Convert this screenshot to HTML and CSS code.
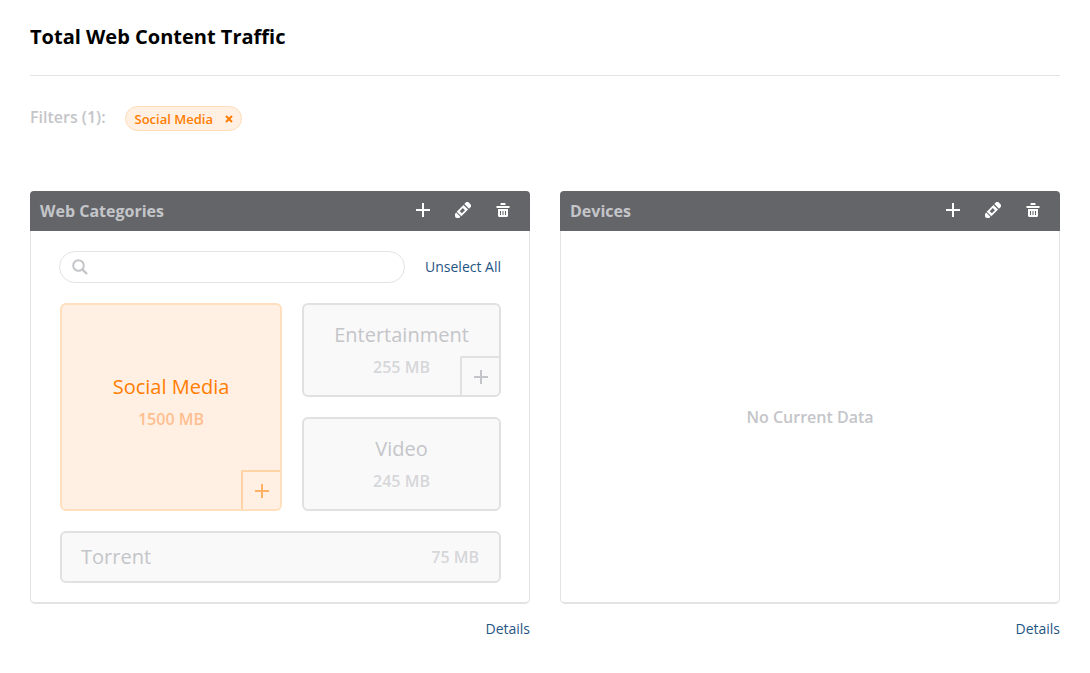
FILE: index.html
```html
<!DOCTYPE html>
<html lang="en">
<head>
<meta charset="utf-8">
<meta name="viewport" content="width=device-width, initial-scale=1">
<title>Total Web Content Traffic</title>
<link rel="stylesheet" href="styles.css">
</head>
<body>
<svg class="sprite" aria-hidden="true">
  <symbol id="plus" viewBox="0 0 14 14"><path d="M7 0v14M0 7h14" fill="none" stroke="currentColor" stroke-width="2"/></symbol>
  <symbol id="pencil" viewBox="0 0 16 16"><g transform="translate(0.5 15.5) rotate(-45)" fill="currentColor"><path d="M0 0L1.500-3H4V3H1.500Z"/><path fill-rule="evenodd" d="M5-3.300H14.500V3.300H5ZM7.500-1.500V1.500H11.800V-1.500Z"/><path d="M15.800-3.300H18.200Q20-3.300 20-1.500V1.500Q20 3.300 18.200 3.300H15.800Z"/></g></symbol>
  <symbol id="trash" viewBox="0 0 14 14"><path fill="currentColor" fill-rule="evenodd" d="M5 0h4q.5 0 .5.5V2h-5V.5Q4.500 0 5 0ZM.5 3h13v2H.5ZM2 6h10v6.500q0 1.500-1.500 1.500h-7Q2 14 2 12.500ZM4 8v4h1V8ZM6.500 8v4h1V8ZM9 8v4h1V8Z"/></symbol>
  <symbol id="search" viewBox="0 0 16 16"><g fill="none" stroke="currentColor" stroke-width="2"><circle cx="6.500" cy="6.500" r="5.300"/><path d="M10.300 10.300L15 15" stroke-width="2.400"/></g></symbol>
  <symbol id="close" viewBox="0 0 8 8"><path d="M1 1l6 6M7 1L1 7" fill="none" stroke="currentColor" stroke-width="2"/></symbol>
</svg>
<main class="page">
  <h1 class="title">Total Web Content Traffic</h1>
  <div class="filters">
    <span class="filters-label">Filters (1):</span>
    <span class="chip">Social Media
      <button class="chip-remove" type="button" aria-label="Remove Social Media"><svg class="icon-close"><use href="#close"/></svg></button>
    </span>
  </div>
  <div class="panels">
    <section class="panel-column">
      <div class="panel">
        <header class="panel-header">
          <h2 class="panel-title">Web Categories</h2>
          <button class="tool" type="button" aria-label="Add"><svg class="icon-tool"><use href="#plus"/></svg></button>
          <button class="tool" type="button" aria-label="Edit"><svg class="icon-pencil"><use href="#pencil"/></svg></button>
          <button class="tool" type="button" aria-label="Delete"><svg class="icon-tool"><use href="#trash"/></svg></button>
        </header>
        <div class="panel-body">
          <div class="search-row">
            <label class="search"><svg class="icon-search"><use href="#search"/></svg><input class="search-input" type="search" aria-label="Search categories"></label>
            <a class="link" href="#">Unselect All</a>
          </div>
          <div class="tiles">
            <div class="tile tile-tall tile-selected">
              <button class="tile-main" type="button" aria-pressed="true"><span class="tile-name">Social Media</span><span class="tile-size">1500 MB</span></button>
              <button class="tile-add" type="button" aria-label="Expand Social Media"><svg class="icon-tool"><use href="#plus"/></svg></button>
            </div>
            <div class="tile">
              <button class="tile-main" type="button" aria-pressed="false"><span class="tile-name">Entertainment</span><span class="tile-size">255 MB</span></button>
              <button class="tile-add" type="button" aria-label="Expand Entertainment"><svg class="icon-tool"><use href="#plus"/></svg></button>
            </div>
            <div class="tile">
              <button class="tile-main" type="button" aria-pressed="false"><span class="tile-name">Video</span><span class="tile-size">245 MB</span></button>
            </div>
            <div class="tile tile-wide">
              <button class="tile-main" type="button" aria-pressed="false"><span class="tile-name">Torrent</span><span class="tile-size">75 MB</span></button>
            </div>
          </div>
        </div>
      </div>
      <a class="link" href="#">Details</a>
    </section>
    <section class="panel-column">
      <div class="panel">
        <header class="panel-header">
          <h2 class="panel-title">Devices</h2>
          <button class="tool" type="button" aria-label="Add"><svg class="icon-tool"><use href="#plus"/></svg></button>
          <button class="tool" type="button" aria-label="Edit"><svg class="icon-pencil"><use href="#pencil"/></svg></button>
          <button class="tool" type="button" aria-label="Delete"><svg class="icon-tool"><use href="#trash"/></svg></button>
        </header>
        <div class="panel-body panel-empty">No Current Data</div>
      </div>
      <a class="link" href="#">Details</a>
    </section>
  </div>
</main>
</body>
</html>
```

FILE: styles.css
```css
* { box-sizing: border-box; }
body {
  margin: 0;
  background: #fff;
  font-family: "Open Sans", sans-serif;
  color: #c4c5c9;
}
button {
  padding: 0;
  border: 0;
  background: none;
  color: inherit;
  font: inherit;
  cursor: pointer;
}
svg { display: block; flex: none; }
.sprite { position: absolute; width: 0; height: 0; }
.icon-tool { width: 14px; height: 14px; }
.icon-pencil { width: 16px; height: 16px; }
.icon-search { width: 16px; height: 16px; }
.icon-close { width: 8px; height: 8px; }

.page { padding: 0 30px 32px; }
.title {
  margin: 0;
  padding: 23px 0 25px;
  border-bottom: 1px solid #e3e3e4;
  color: #000;
  font-size: 20px;
  font-weight: 700;
  line-height: 27px;
}
.filters {
  display: flex;
  align-items: center;
  gap: 19px;
  padding: 30px 0 60px;
}
.filters-label {
  padding-bottom: 3px;
  font-size: 16px;
  font-weight: 600;
  line-height: 22px;
}
.chip {
  display: flex;
  align-items: center;
  gap: 12px;
  height: 25px;
  padding: 0 8px 0 9px;
  border: 1px solid #ffdcb8;
  border-radius: 13px;
  background: #fff0e3;
  color: #ff7d00;
  font-size: 13px;
  font-weight: 600;
  line-height: 18px;
}
.panels {
  display: grid;
  grid-template-columns: 1fr 1fr;
  gap: 30px;
}
.panel-column {
  display: flex;
  flex-direction: column;
  align-items: flex-end;
  gap: 15px;
}
.panel {
  display: flex;
  flex: 1;
  flex-direction: column;
  width: 100%;
}
.panel-header {
  display: flex;
  height: 40px;
  padding: 0 7px 0 10px;
  border-radius: 4px 4px 0 0;
  background: #646569;
}
.panel-title {
  flex: 1;
  margin: 0;
  font-size: 16px;
  font-weight: 700;
  line-height: 40px;
}
.tool {
  display: flex;
  align-items: center;
  justify-content: center;
  width: 40px;
  height: 38px;
  color: #fff;
}
.panel-body {
  flex: 1;
  padding: 20px 28px 19px;
  border: 1px solid #e3e3e4;
  border-width: 0 1px 2px;
  border-radius: 0 0 5px 5px;
}
.panel-empty {
  display: flex;
  align-items: center;
  justify-content: center;
  font-size: 16px;
  font-weight: 600;
}
.search-row {
  display: flex;
  align-items: center;
  gap: 20px;
}
.search {
  display: flex;
  flex: 1;
  align-items: center;
  gap: 8px;
  height: 32px;
  padding: 0 12px;
  border: 1px solid #e3e3e4;
  border-radius: 16px;
}
.search-input {
  flex: 1;
  min-width: 0;
  padding: 0;
  border: 0;
  outline: 0;
  background: none;
  color: #646569;
  font: inherit;
  font-size: 14px;
}
.link {
  color: #1f5583;
  font-size: 14px;
  line-height: 20px;
  text-decoration: none;
}
.tiles {
  display: grid;
  grid-template-columns: 222fr 199fr;
  grid-template-rows: 94px 94px 52px;
  gap: 20px;
  padding: 20px 0 0 1px;
}
.tile {
  position: relative;
  overflow: hidden;
  border: 2px solid #e1e1e2;
  border-radius: 6px;
  background: #f9f9f9;
}
.tile-tall { grid-row: span 2; }
.tile-wide { grid-column: span 2; }
.tile-main {
  display: flex;
  flex-direction: column;
  align-items: center;
  justify-content: center;
  gap: 8px;
  width: 100%;
  height: 100%;
  padding-bottom: 2px;
}
.tile-tall .tile-main { padding-bottom: 11px; }
.tile-name {
  font-size: 20px;
  line-height: 27px;
}
.tile-size {
  color: #d6d7d9;
  font-size: 16px;
  font-weight: 600;
  line-height: 22px;
}
.tile-wide .tile-main {
  flex-direction: row;
  justify-content: space-between;
  padding: 0 20px 1px 19px;
}
.tile-add {
  position: absolute;
  right: 0;
  bottom: 0;
  display: flex;
  align-items: center;
  justify-content: center;
  width: 39px;
  height: 39px;
  border: solid #e1e1e2;
  border-width: 2px 0 0 2px;
  border-top-left-radius: 2px;
}
.tile-selected {
  border-color: #ffdfbd;
  background: #fff0e3;
  color: #ff7d00;
}
.tile-selected .tile-size { color: #ffbf91; }
.tile-selected .tile-add {
  border-color: #ffd3a3;
  color: #ffb165;
}
```
